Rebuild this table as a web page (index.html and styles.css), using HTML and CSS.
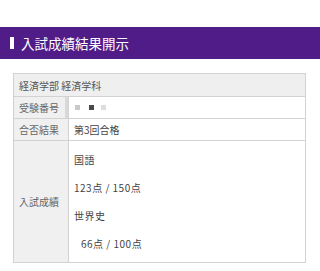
FILE: index.html
```html
<!DOCTYPE html>
<html lang="ja">
<head>
  <meta charset="UTF-8" />
  <meta name="viewport" content="width=device-width, initial-scale=1.0"/>
  <title>入試成績結果開示</title>
  <link rel="stylesheet" href="styles.css">
</head>
<body>

  <h1 class="page-title">入試成績結果開示</h1>

  <div class="result">
    <table class="result-table">
      <tr>
        <td class="dept" colspan="2">経済学部 経済学科</td>
      </tr>
      <tr>
        <th class="label label-edge">受験番号</th>
        <td class="value">
          <div class="masked">
            <span class="dot dot-light"></span>
            <span class="dot dot-dark"></span>
            <span class="dot dot-pale"></span>
          </div>
        </td>
      </tr>
      <tr>
        <th class="label">合否結果</th>
        <td class="value">第3回合格</td>
      </tr>
      <tr>
        <th class="label">入試成績</th>
        <td class="value scores">
          <p>国語</p>
          <p>123点 / 150点</p>
          <p>世界史</p>
          <p class="pad">66点 / 100点</p>
        </td>
      </tr>
    </table>
  </div>

</body>
</html>
```

FILE: styles.css
```css
body {
  margin: 0;
  padding-top: 27px;
  background: #fff;
  font-family: "Noto Sans CJK JP", "Noto Sans", sans-serif;
  color: #444;
}

.page-title {
  margin: 0;
  height: 32px;
  display: flex;
  align-items: center;
  gap: 7px;
  padding-left: 10px;
  background: #4f1c88;
  color: #fff;
  font-size: 13.5px;
  font-weight: normal;
}
.page-title::before {
  content: "";
  width: 4px;
  height: 12px;
  background: #fff;
}

.result {
  padding: 14px 14px 0 13px;
}

.result-table {
  width: 100%;
  border-collapse: collapse;
  font-size: 10px;
  line-height: 13px;
}
.result-table th,
.result-table td {
  border: 1px solid #d2d2d2;
  padding: 4px 5px;
  text-align: left;
  font-weight: normal;
}

.dept {
  background: #efefef;
  color: #555;
  padding-top: 5px !important;
}

.label {
  width: 44px;
  background: #f0f0f0;
  color: #666;
  white-space: nowrap;
}
.label-edge {
  box-shadow: inset -3px 0 #d9d9d9;
}

.value {
  background: #fff;
}

.masked {
  display: flex;
  align-items: center;
  height: 13px;
  padding-left: 1px;
}
.dot {
  width: 5px;
  height: 5px;
  margin-right: 9px;
}
.dot-light { background: #c9c9c9; }
.dot-dark { background: #4a4a4a; margin-right: 7px; }
.dot-pale { background: #dedede; }

.scores {
  padding: 5px 5px 4px !important;
  line-height: 28px;
  letter-spacing: 0.5px;
}
.scores p {
  margin: 0;
}
.scores .pad {
  padding-left: 7px;
}
```
